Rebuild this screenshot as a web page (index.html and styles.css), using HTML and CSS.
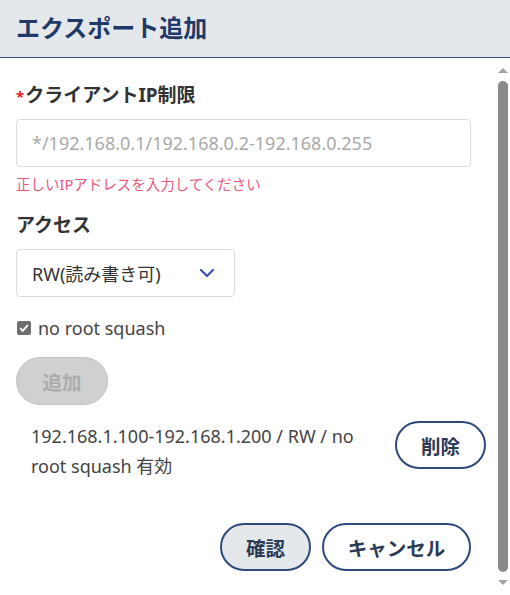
FILE: index.html
```html
<!DOCTYPE html>
<html lang="ja">
<head>
    <meta charset="UTF-8">
    <meta name="viewport" content="width=device-width, initial-scale=1.0">
    <title>エクスポート追加</title>
    <link rel="stylesheet" href="styles.css">
</head>
<body>
    <div class="modal">
        <div class="head">
            <h1>エクスポート追加</h1>
        </div>
        <div class="main">
            <div class="content">
                <label class="lbl"><span class="req">*</span>クライアントIP制限</label>
                <div class="field ip">*/192.168.0.1/192.168.0.2-192.168.0.255</div>
                <p class="err">正しいIPアドレスを入力してください</p>

                <label class="lbl access">アクセス</label>
                <div class="field sel">
                    <span>RW(読み書き可)</span>
                    <svg width="16" height="10" viewBox="0 0 16 10"><path d="M2 2 L8 8 L14 2" fill="none" stroke="#3d4fc4" stroke-width="2.2" stroke-linecap="round" stroke-linejoin="round"/></svg>
                </div>

                <div class="chk">
                    <span class="box"><svg width="14" height="14" viewBox="0 0 14 14"><path d="M3.2 7.2 L5.8 9.8 L10.8 4" fill="none" stroke="#fff" stroke-width="1.9"/></svg></span>
                    <span>no root squash</span>
                </div>

                <button class="btn add" disabled>追加</button>

                <div class="entry">
                    <p>192.168.1.100-192.168.1.200 / RW / no root squash 有効</p>
                    <button class="btn del">削除</button>
                </div>

                <div class="foot">
                    <button class="btn ok">確認</button>
                    <button class="btn cancel">キャンセル</button>
                </div>
            </div>
            <div class="bar">
                <span class="up"></span>
                <span class="thumb"></span>
                <span class="down"></span>
            </div>
        </div>
    </div>
</body>
</html>
```

FILE: styles.css
```css
* , *::after , *::before{
    box-sizing: border-box;
    margin: 0;
    padding: 0;
}
html , body{
    width: 100%;
    height: 100%;
}
body{
    font-family: "Noto Sans", "Noto Sans CJK JP", sans-serif;
    color: #333;
    background: #fff;
    overflow: hidden;
}
.modal{
    width: 510px;
    height: 595px;
    display: flex;
    flex-direction: column;
}
.head{
    height: 58px;
    background-color: #e4e8eb;
    border-bottom: 1px solid #2d4a7a;
    display: flex;
    align-items: center;
    padding-left: 16px;
    flex-shrink: 0;
}
.head h1{
    font-size: 24px;
    font-weight: 700;
    color: #1f3a68;
    line-height: 30px;
    margin-top: -1px;
}
.main{
    flex: 1;
    display: flex;
    overflow: hidden;
}
.content{
    flex: 1;
    padding: 23px 24px 0 16px;
    display: flex;
    flex-direction: column;
}
.lbl{
    display: block;
    font-size: 19px;
    font-weight: 700;
    line-height: 28px;
    color: #333;
}
.req{
    color: #e02020;
    font-size: 15px;
    margin-right: 1px;
}
.field{
    border: 1px solid #dcdcdc;
    border-radius: 4px;
    height: 48px;
    display: flex;
    align-items: center;
    padding-left: 15px;
    font-size: 18px;
}
.ip{
    margin-top: 9px;
    color: #a9a9a9;
}
.err{
    margin-top: 7px;
    font-size: 14.5px;
    line-height: 20px;
    color: #e65b7e;
}
.access{
    margin-top: 17px;
}
.sel{
    margin-top: 10px;
    width: 219px;
    color: #333;
    justify-content: space-between;
    padding-right: 19px;
}
.chk{
    margin-top: 19px;
    display: flex;
    align-items: center;
    gap: 7px;
    height: 24px;
    font-size: 18px;
    color: #444;
    padding-left: 1px;
}
.box{
    width: 14px;
    height: 14px;
    border-radius: 2px;
    background-color: #6e6e6e;
    display: flex;
}
.btn{
    height: 48px;
    border-radius: 24px;
    font-family: inherit;
    font-size: 19.5px;
    font-weight: 700;
    background: #fff;
    border: 2px solid #2d4a7a;
    color: #2b3a55;
}
.add{
    margin-top: 17px;
    width: 92px;
    background-color: #d0d0d0;
    border: 1px solid #c2c2c2;
    color: #acacac;
}
.entry{
    margin-top: 16px;
    display: flex;
    align-items: flex-start;
    margin-right: -15px;
}
.entry p{
    width: 379px;
    padding-left: 15px;
    padding-right: 20px;
    font-size: 18px;
    line-height: 30px;
    color: #444;
}
.del{
    width: 91px;
}
.foot{
    margin-top: 42px;
    display: flex;
    justify-content: flex-end;
    gap: 11px;
}
.ok{
    width: 91px;
    background-color: #e4e8eb;
}
.cancel{
    width: 149px;
}
.bar{
    width: 15px;
    display: flex;
    flex-direction: column;
    align-items: center;
    padding: 10px 0 10px;
    background: #fff;
}
.up , .down{
    width: 0;
    height: 0;
    border-left: 5px solid transparent;
    border-right: 5px solid transparent;
}
.up{
    border-bottom: 5px solid #a3a3a3;
}
.down{
    border-top: 5px solid #a3a3a3;
}
.thumb{
    flex: 1;
    width: 10px;
    margin: 8px 0;
    border-radius: 5px;
    background-color: #8a8a8a;
}
```
